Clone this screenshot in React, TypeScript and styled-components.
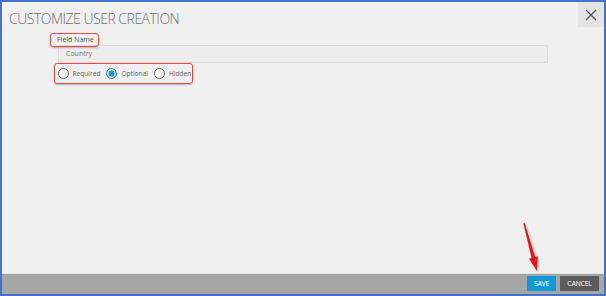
import { createGlobalStyle, styled } from 'styled-components';

const GlobalStyle = createGlobalStyle`
  html, body {
    margin: 0;
    padding: 0;
    background: #f0f0f0;
  }
  * {
    box-sizing: border-box;
  }
`;

const Frame = styled.div`
  position: relative;
  width: 606px;
  height: 296px;
  border: 2px solid #4472c4;
  background: #f0f0f0;
  display: flex;
  flex-direction: column;
  font-family: 'Open Sans', 'Liberation Sans', sans-serif;
`;

const Header = styled.div`
  height: 25px;
  display: flex;
  align-items: flex-start;
  justify-content: space-between;
`;

const Title = styled.h1`
  margin: 0;
  padding: 8px 0 0 7px;
  font-size: 14px;
  line-height: 18px;
  font-weight: 300;
  color: #6f6f6f;
  letter-spacing: -0.5px;
`;

const CloseButton = styled.button`
  width: 26px;
  height: 25px;
  border: none;
  padding: 0;
  background: #e4e4e4;
  display: flex;
  align-items: center;
  justify-content: center;
  cursor: pointer;
`;

const Content = styled.div`
  flex: 1;
  padding: 6px 0 0 56px;
  display: flex;
  flex-direction: column;
  align-items: flex-start;
`;

const Highlight = styled.div`
  border: 1.5px solid #e34a4a;
  border-radius: 3px;
  box-shadow: 0 1px 2px rgba(0, 0, 0, 0.25);
`;

const LabelBox = styled(Highlight)`
  margin-left: -8px;
  width: 49px;
  height: 14px;
  padding-left: 6px;
  font-size: 7px;
  line-height: 11px;
  color: #555;
  position: relative;
  z-index: 1;
`;

const Input = styled.div`
  margin-top: -2px;
  width: 490px;
  height: 18px;
  border: 1px solid #dcdcdc;
  background: #ededed;
  padding-left: 7px;
  font-size: 7px;
  line-height: 16px;
  color: #777;
`;

const RadioGroup = styled(Highlight)`
  margin-left: -4px;
  width: 139px;
  height: 21px;
  display: flex;
  align-items: center;
  padding-left: 2.5px;
`;

const RadioOption = styled.label`
  display: flex;
  align-items: center;
  gap: 4px;
  margin-right: 6px;
  font-size: 6.6px;
  color: #666;
  white-space: nowrap;
`;

const RadioCircle = styled.span<{ $checked?: boolean }>`
  flex: none;
  width: 11px;
  height: 11px;
  border-radius: 50%;
  border: 1.5px solid ${(p) => (p.$checked ? '#1e8fd0' : '#666')};
  background: ${(p) => (p.$checked ? '#1e8fd0' : '#f5f5f5')};
  box-shadow: ${(p) => (p.$checked ? 'inset 0 0 0 1.5px #fff' : 'none')};
`;

const Footer = styled.div`
  height: 21px;
  border-top: 1px solid #e2e2e2;
  background: #a6a6a6;
  display: flex;
  justify-content: flex-end;
  align-items: flex-start;
  gap: 4px;
  padding: 2px 5px 0 0;
`;

const FooterButton = styled.button<{ $primary?: boolean }>`
  height: 15px;
  padding: 0;
  width: ${(p) => (p.$primary ? '29px' : '39px')};
  border: none;
  background: ${(p) => (p.$primary ? '#1199d8' : '#5c5c5c')};
  color: #fff;
  font-family: 'Open Sans', 'Liberation Sans', sans-serif;
  font-size: 7px;
  letter-spacing: -0.3px;
  cursor: pointer;
`;

const Arrow = styled.svg`
  position: absolute;
  left: 513px;
  top: 216px;
  filter: drop-shadow(1px 1px 1px rgba(0, 0, 0, 0.3));
`;

const options = [
  { label: 'Required', checked: false },
  { label: 'Optional', checked: true },
  { label: 'Hidden', checked: false },
];

export default function App() {
  return (
    <>
      <GlobalStyle />
      <Frame>
        <Header>
          <Title>CUSTOMIZE USER CREATION</Title>
          <CloseButton>
            <svg width="12" height="12" viewBox="0 0 12 12">
              <path d="M1 1 L11 11 M11 1 L1 11" stroke="#555" strokeWidth="1.3" />
            </svg>
          </CloseButton>
        </Header>
        <Content>
          <LabelBox>Field Name</LabelBox>
          <Input>Country</Input>
          <RadioGroup>
            {options.map((o) => (
              <RadioOption key={o.label}>
                <RadioCircle $checked={o.checked} />
                {o.label}
              </RadioOption>
            ))}
          </RadioGroup>
        </Content>
        <Footer>
          <FooterButton $primary>SAVE</FooterButton>
          <FooterButton>CANCEL</FooterButton>
        </Footer>
        <Arrow width="32" height="60" viewBox="0 0 32 60">
          <path
            d="M8.4 5.2 L9.6 4.8 L20.1 39 L22.7 38.3 L22 53 L14 40.7 L16.6 40 Z"
            fill="#e8141b"
          />
        </Arrow>
      </Frame>
    </>
  );
}
